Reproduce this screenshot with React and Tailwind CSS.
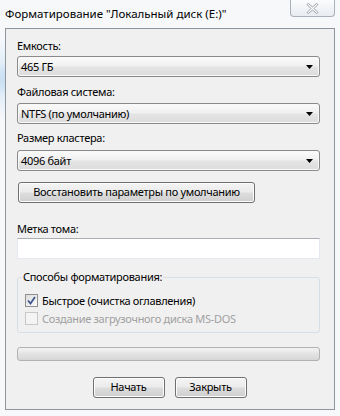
import React from "react";

const font = { fontFamily: '"Noto Sans", "DejaVu Sans", sans-serif' };

function Combo({ value }) {
  return (
    <div className="h-[21px] w-full rounded-[3px] border border-[#8a8a8a] bg-[linear-gradient(#fbfbfb_0%,#f0f0f0_45%,#e4e4e4_55%,#dcdcdc_100%)] flex items-center pl-[3px] pr-[6px] shadow-[inset_0_0_0_1px_#f8f8f8]">
      <span className="flex-1 text-[11px] tracking-[-0.3px] leading-none text-black whitespace-nowrap">{value}</span>
      <svg width="7" height="4" viewBox="0 0 7 4"><path d="M0 0H7L3.5 4Z" fill="#000" /></svg>
    </div>
  );
}

function Btn({ children, className = "" }) {
  return (
    <div className={"h-[21px] rounded-[3px] border border-[#707070] bg-[linear-gradient(#f4f4f4_0%,#ebebeb_48%,#dddddd_52%,#cfcfcf_100%)] shadow-[inset_0_0_0_1px_#fcfcfc] flex items-center justify-center text-[11px] tracking-[-0.3px] text-black whitespace-nowrap " + className}>
      {children}
    </div>
  );
}

const label = "text-[11px] tracking-[-0.3px] leading-[16px] text-black whitespace-nowrap";

export default function App() {
  return (
    <div
      style={font}
      className="w-[340px] h-[416px] bg-[#f6f8fa] bg-[radial-gradient(ellipse_55%_10%_at_10%_19%,#bcd8ef_0%,rgba(215,232,247,0.6)_45%,transparent_100%)] flex flex-col overflow-hidden"
    >
      <div className="h-[28px] flex items-start">
        <div className="flex-1 pl-[5px] pt-[6px] text-[11.5px] leading-[16px] text-black whitespace-nowrap">
          Форматирование "Локальный диск (E:)"
        </div>
        <div className="mr-[5px] w-[45px] h-[17px] rounded-b-[4px] border border-t-0 border-[#a9b0ba] bg-[linear-gradient(#fbfcfd,#e9ecf0)] flex items-center justify-center">
          <svg width="13" height="11" viewBox="0 0 13 11">
            <path
              d="M1 1.5L2.5 0.5L6.5 4L10.5 0.5L12 1.5L8 5.5L12 9.5L10.5 10.5L6.5 7L2.5 10.5L1 9.5L5 5.5Z"
              fill="#ffffff"
              stroke="#8e949c"
              strokeWidth="0.9"
              strokeLinejoin="round"
            />
          </svg>
        </div>
      </div>
      <div className="mx-[5px] h-[382px] border border-[#8e959c] bg-[#f0f0f0] pl-[11px] pr-[14px] flex flex-col">
        <div className={"mt-[9px] " + label}>Емкость:</div>
        <div className="mt-[2px]"><Combo value="465 ГБ" /></div>
        <div className={"mt-[7px] " + label}>Файловая система:</div>
        <div className="mt-[3px]"><Combo value="NTFS (по умолчанию)" /></div>
        <div className={"mt-[6px] " + label}>Размер кластера:</div>
        <div className="mt-[4px]"><Combo value="4096 байт" /></div>
        <div className="mt-[11px] pl-[1px]">
          <Btn className="w-[237px]">Восстановить параметры по умолчанию</Btn>
        </div>
        <div className={"mt-[18px] " + label}>Метка тома:</div>
        <div className="mt-[1px] h-[21px] w-full border border-[#e3e9ef] border-t-[#abadb3] bg-white" />
        <div className="mt-[18px] relative h-[56px] border border-[#d5dfe5] rounded-[3px]">
          <div className={"absolute left-[4px] top-[-9px] px-[1px] bg-[#f0f0f0] " + label}>
            Способы форматирования:
          </div>
          <div className="pt-[16px] pl-[7px] flex flex-col gap-[5px]">
            <div className="flex items-center gap-[4px] h-[13px]">
              <div className="w-[13px] h-[13px] border border-[#8f8f8f] bg-[linear-gradient(135deg,#dcdcdc,#fbfbfb)] flex items-center justify-center">
                <svg width="9" height="9" viewBox="0 0 9 9">
                  <path d="M1 4.5L3.5 7.5L8 1" fill="none" stroke="#3f568f" strokeWidth="1.8" />
                </svg>
              </div>
              <span className="text-[11px] tracking-[-0.3px] leading-none text-black whitespace-nowrap">Быстрое (очистка оглавления)</span>
            </div>
            <div className="flex items-center gap-[4px] h-[13px]">
              <div className="w-[13px] h-[13px] border border-[#c8c8c8] bg-[#f4f4f4]" />
              <span className="text-[11px] tracking-[-0.3px] leading-none text-[#a0a0a0] whitespace-nowrap">Создание загрузочного диска MS-DOS</span>
            </div>
          </div>
        </div>
        <div className="mt-[14px] h-[14px] w-full rounded-[3px] border border-[#b2b2b2] bg-[linear-gradient(#f3f3f3_0%,#e3e3e3_50%,#d6d6d6_100%)]" />
        <div className="mt-[16px] flex justify-center gap-[10px] pl-[2px]">
          <Btn className="w-[72px]">Начать</Btn>
          <Btn className="w-[72px]">Закрыть</Btn>
        </div>
      </div>
    </div>
  );
}
